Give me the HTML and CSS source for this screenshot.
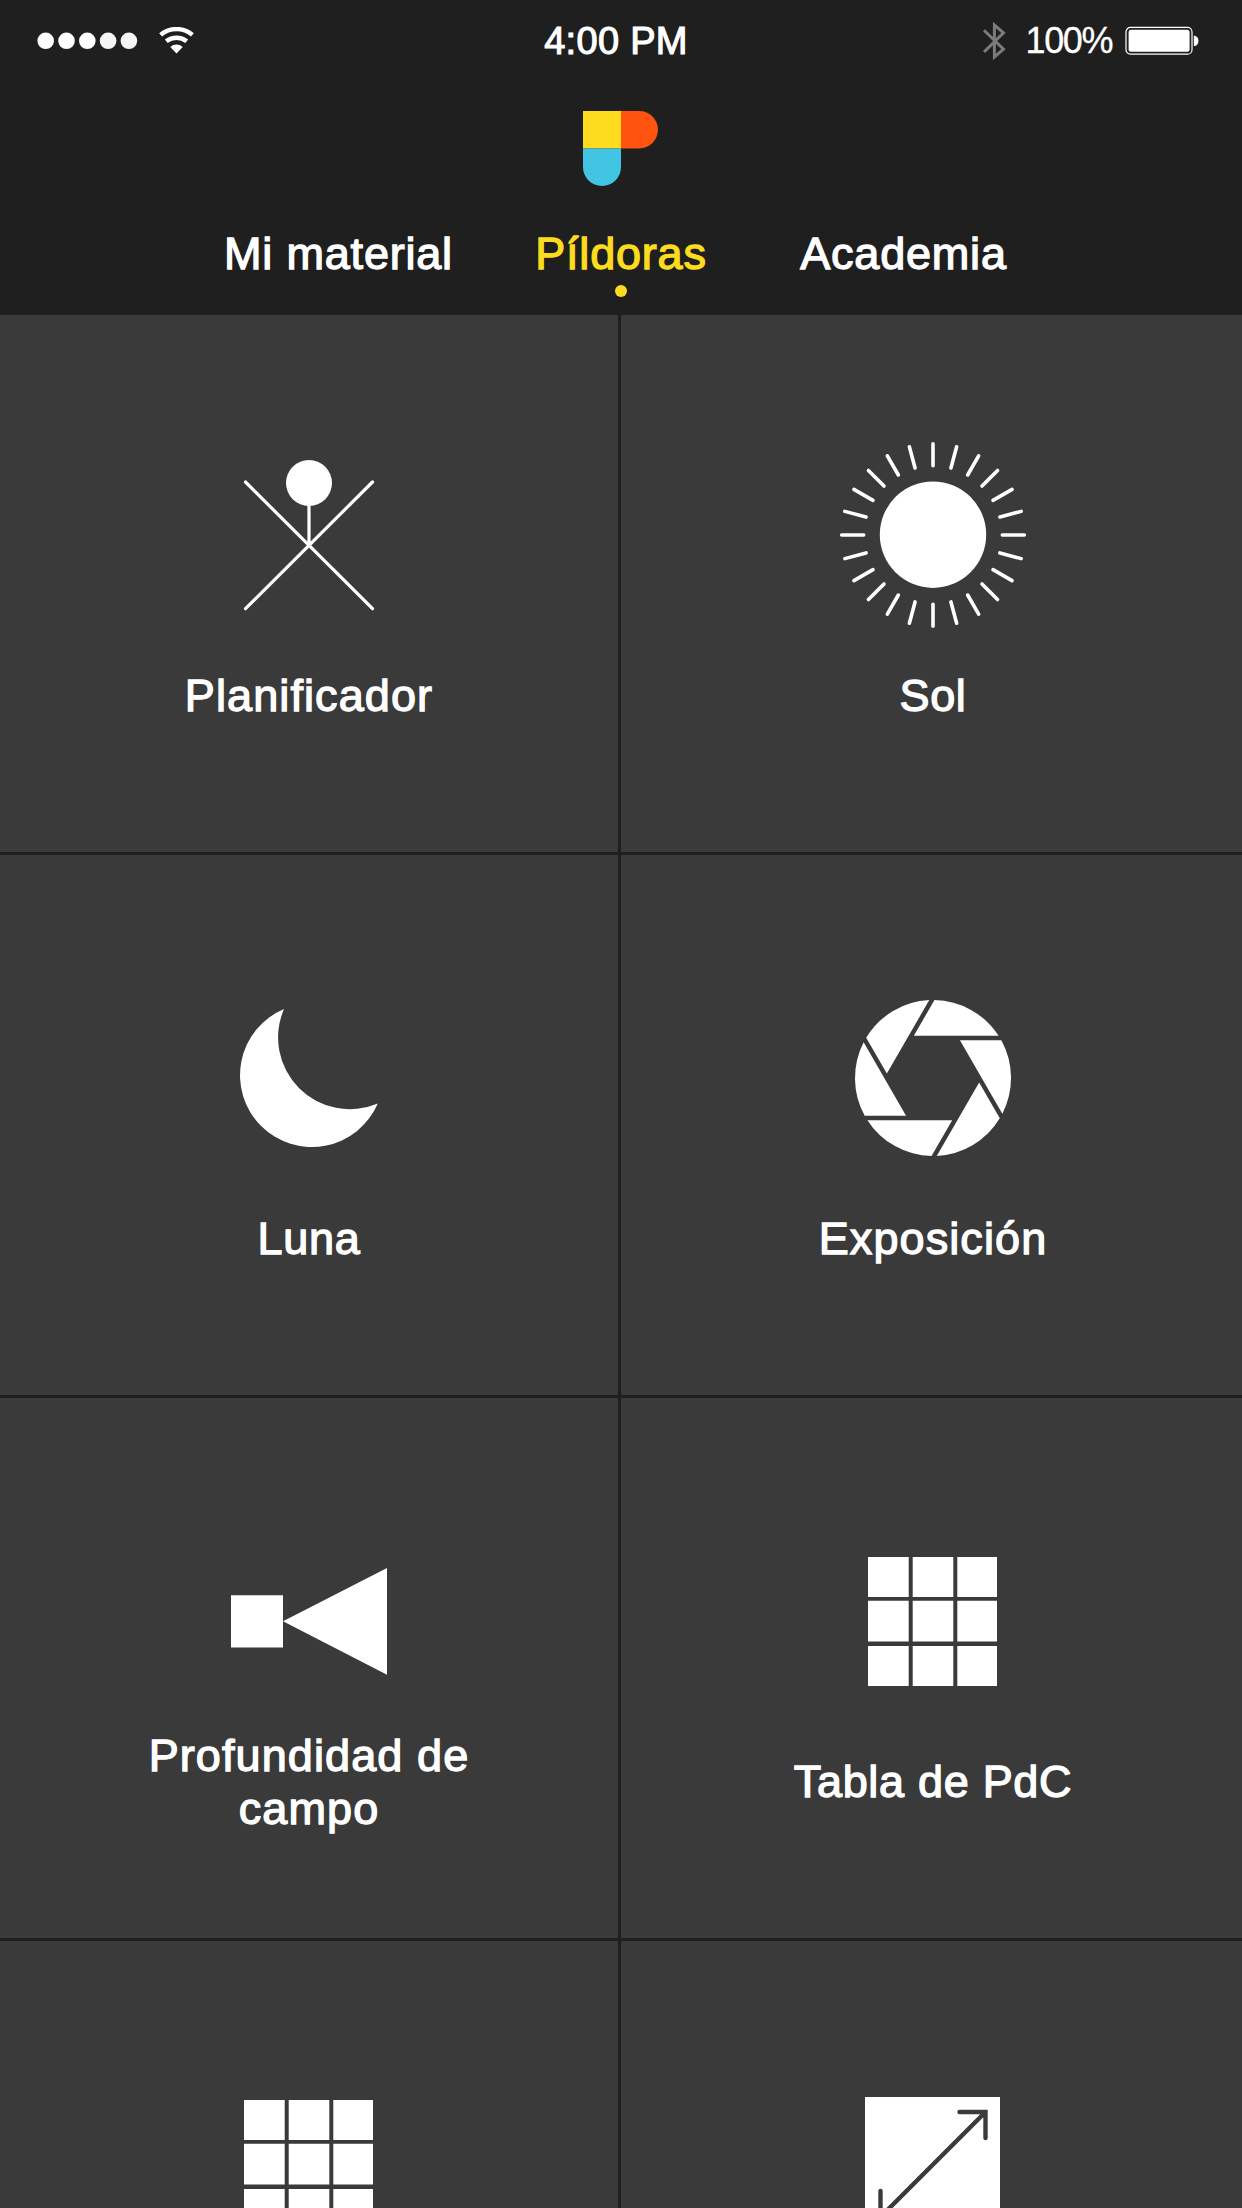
FILE: index.html
```html
<!DOCTYPE html>
<html lang="es">
<head>
<meta charset="utf-8">
<title>Píldoras</title>
<link rel="stylesheet" href="styles.css">
</head>
<body>
<header class="header">
  <div class="status">
    <div class="status-left">
      <svg class="signal" width="101" height="18" viewBox="0 0 101 18" fill="#fff">
        <circle cx="8.7" cy="8.8" r="8.3"/><circle cx="29.5" cy="8.8" r="8.3"/><circle cx="50.3" cy="8.8" r="8.3"/><circle cx="71.1" cy="8.8" r="8.3" fill="#f5f5f5"/><circle cx="91.9" cy="8.8" r="8.3" fill="#f5f5f5"/>
      </svg>
      <svg width="36" height="28" viewBox="0 0 36 28">
        <path d="M1.6 7.9A24.6 24.6 0 0 1 33.4 7.9M7.3 14.3A16.2 16.2 0 0 1 27.7 14.3" fill="none" stroke="#fff" stroke-width="4.5"/>
        <path d="M17.5 26.5L11.3 20.1A9 9 0 0 1 23.7 20.1Z" fill="#fff"/>
      </svg>
    </div>
    <div class="time">4:00 PM</div>
    <div class="status-right">
      <svg class="bluetooth" width="24" height="40" viewBox="0 0 24 40">
        <path d="M2 9.2L21.5 28.2L12.4 36V4L21.5 11.8L2 31" fill="none" stroke="#7b7b7b" stroke-width="3"/>
      </svg>
      <span class="percent">100%</span>
      <svg width="74" height="30" viewBox="0 0 74 30">
        <rect x="1" y="1.4" width="66" height="26.8" rx="4.5" fill="none" stroke="#fff" stroke-width="1.2"/>
        <rect x="3.6" y="3.8" width="61" height="22" rx="2.5" fill="#fff"/>
        <path d="M68.8 9.8C75 9.8 75 20 68.8 20Z" fill="#fff"/>
      </svg>
    </div>
  </div>
  <svg class="logo" width="75" height="75" viewBox="0 0 75 75">
    <path d="M0 0H38V37.4H0Z" fill="#fddb1f"/>
    <path d="M38 0H56.3A18.7 18.7 0 0 1 56.3 37.4H38Z" fill="#ff5310"/>
    <path d="M0 37.4H38V56A19 19 0 0 1 0 56Z" fill="#41c5e2"/>
  </svg>
  <nav class="tabs">
    <a class="tab">Mi material</a>
    <a class="tab active">Píldoras</a>
    <a class="tab">Academia</a>
  </nav>
</header>

<main class="tiles">
  <section class="tile">
    <svg class="icon" viewBox="-94 -94 188 188">
      <path d="M-63.5 -53L63.5 73.7M63.5 -53L-63.5 73.7M0 -50V10" fill="none" stroke="#fff" stroke-width="3.2" stroke-linecap="round"/>
      <circle cy="-52" r="23" fill="#fff"/>
    </svg>
    <div class="label wide">Planificador</div>
  </section>
  <section class="tile">
    <svg class="icon" viewBox="-94 -94 188 188">
      <defs>
        <g id="rays" stroke="#fff" stroke-width="3.6" stroke-linecap="round">
          <path id="ray" d="M0 -91.3V-69.3"/>
          <use href="#ray" transform="rotate(15)"/>
          <use href="#ray" transform="rotate(30)"/>
          <use href="#ray" transform="rotate(45)"/>
          <use href="#ray" transform="rotate(60)"/>
          <use href="#ray" transform="rotate(75)"/>
        </g>
      </defs>
      <circle cy="-.3" r="53.2" fill="#fff"/>
      <use href="#rays"/>
      <use href="#rays" transform="rotate(90)"/>
      <use href="#rays" transform="rotate(180)"/>
      <use href="#rays" transform="rotate(270)"/>
    </svg>
    <div class="label">Sol</div>
  </section>
  <section class="tile">
    <svg class="icon" viewBox="-94 -94 188 188">
      <path d="M-25 -69A71.8 71.8 0 1 0 68.8 25.5A71.7 71.7 0 0 1 -25 -69Z" fill="#fff"/>
    </svg>
    <div class="label">Luna</div>
  </section>
  <section class="tile">
    <svg class="icon" viewBox="-94 -94 188 188" fill="#fff">
      <path id="blade" d="M1.5 -78A78 78 0 0 1 65.6 -42.2H-19.2Z"/>
      <use href="#blade" transform="rotate(60)"/>
      <use href="#blade" transform="rotate(120)"/>
      <use href="#blade" transform="rotate(180)"/>
      <use href="#blade" transform="rotate(240)"/>
      <use href="#blade" transform="rotate(300)"/>
    </svg>
    <div class="label wide">Exposición</div>
  </section>
  <section class="tile">
    <svg class="icon" viewBox="-94 -94 188 188" fill="#fff">
      <path d="M-78 -25.7H-26V26.5H-78ZM-26 .3L78 -53V53.8Z"/>
    </svg>
    <div class="label wide">Profundidad de<br>campo</div>
  </section>
  <section class="tile">
    <svg class="icon" viewBox="-94 -94 188 188" fill="#fff">
      <g id="table">
        <path id="cells" d="M-65 -64H-24.3V-24H-65ZM-20.3 -64H20.3V-24H-20.3ZM24.3 -64H64V-24H24.3Z"/>
        <path d="M-65 -20.2H-24.3V20.5H-65ZM-20.3 -20.2H20.3V20.5H-20.3ZM24.3 -20.2H64V20.5H24.3Z"/>
        <use href="#cells" y="89"/>
      </g>
    </svg>
    <div class="label">Tabla de PdC</div>
  </section>
  <section class="tile">
    <svg class="icon" viewBox="-94 -94 188 188" fill="#fff"><use href="#table"/></svg>
  </section>
  <section class="tile">
    <svg class="icon" viewBox="-94 -94 188 188">
      <path d="M-68 -67H67V68H-68Z" fill="#fff"/>
      <path d="M26.5 -52H52.5V-26M52 -51.5L-52 52.5M-52.5 27V53H-26.5" fill="none" stroke="#3a3a3a" stroke-width="4.4" stroke-linecap="round"/>
    </svg>
  </section>
</main>
</body>
</html>
```
FILE: styles.css
```css
* { box-sizing: border-box; }
body {
  margin: 0;
  height: 2208px;
  overflow: hidden;
  display: flex;
  flex-direction: column;
  background: #1f1f1f;
  color: #fff;
  font-family: "Liberation Sans", Arial, sans-serif;
}
svg { display: block; flex: none; }

.header {
  height: 315px;
  flex: none;
  display: flex;
  flex-direction: column;
}
.status {
  height: 81px;
  display: grid;
  grid-template-columns: 466px 300px 1fr;
  align-items: center;
}
.status-left {
  display: flex;
  align-items: center;
  gap: 21px;
  padding-left: 37px;
}
.time {
  text-align: center;
  font-size: 38px;
  line-height: 44px;
  letter-spacing: .3px;
  -webkit-text-stroke: 1.1px;
}
.status-right {
  display: flex;
  align-items: center;
  justify-content: flex-end;
  padding-right: 43px;
}
.bluetooth { margin-right: 20px; }
.percent {
  font-size: 36px;
  line-height: 44px;
  letter-spacing: -1.4px;
  margin-right: 13px;
  -webkit-text-stroke: .3px;
}

.logo { margin: 30px 0 0 583px; }

.tabs {
  display: grid;
  grid-template-columns: repeat(3, 282.5px);
  justify-content: center;
  padding-top: 41px;
}
.tab {
  display: flex;
  flex-direction: column;
  align-items: center;
  font-size: 45px;
  line-height: 53px;
  letter-spacing: .8px;
  -webkit-text-stroke: 1.3px;
}
.active { color: #fddb1f; }
.active::after {
  content: "";
  width: 12px;
  height: 12px;
  margin-top: 5px;
  border-radius: 50%;
  background: #fddb1f;
}

.tiles {
  flex: none;
  display: grid;
  grid-template-columns: 618px 621px;
  grid-template-rows: 537px 540px 540px 267px;
  gap: 3px;
}
.tile {
  background: #3a3a3a;
  display: flex;
  flex-direction: column;
  align-items: center;
  padding-top: 129px;
  overflow: hidden;
}
.tile:nth-child(-n+2) { padding-top: 126px; }
.tile:nth-child(even) { padding-left: 3px; }
.icon {
  width: 188px;
  height: 188px;
  margin-bottom: 14px;
}
.label {
  height: 105px;
  display: flex;
  align-items: center;
  text-align: center;
  font-size: 45px;
  line-height: 53px;
  letter-spacing: .7px;
  -webkit-text-stroke: 1.3px;
}
.wide { letter-spacing: 1.1px; }
```
